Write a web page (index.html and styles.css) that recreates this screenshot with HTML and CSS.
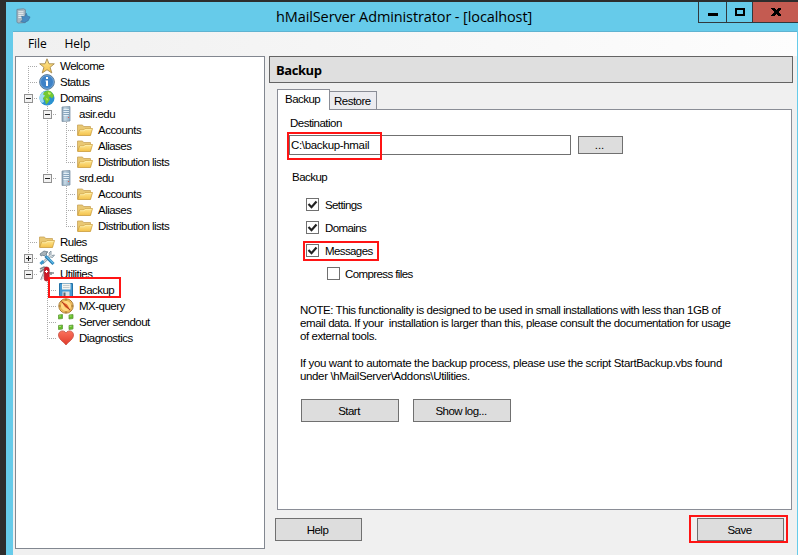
FILE: index.html
```
<!DOCTYPE html>
<html lang="en">
<head>
<meta charset="utf-8">
<title>hMailServer Administrator - [localhost]</title>
<link rel="stylesheet" href="styles.css">
</head>
<body>
<svg class="defs" width="0" height="0">
  <defs>
    <linearGradient id="gold" x1="0" y1="0" x2="0" y2="1"><stop offset="0" stop-color="#ffe893"/><stop offset="1" stop-color="#f3c14a"/></linearGradient>
    <linearGradient id="steel" x1="0" y1="0" x2="1" y2="0"><stop offset="0" stop-color="#7d98ad"/><stop offset=".35" stop-color="#c9dbe8"/><stop offset="1" stop-color="#8daabe"/></linearGradient>
    <linearGradient id="red" x1="0" y1="0" x2="0" y2="1"><stop offset="0" stop-color="#fb725d"/><stop offset="1" stop-color="#df3b2b"/></linearGradient>
    <symbol id="star" viewBox="0 0 16 16"><path d="M8 .8l2 5h5.300l-4.200 3.500 1.700 5.700L8 11.700 3.200 15l1.700-5.700L.7 5.800H6z" fill="url(#gold)" stroke="#a58a50" stroke-width=".9"/></symbol>
    <symbol id="info" viewBox="0 0 16 16"><circle cx="8" cy="8" r="7.400" fill="#3e82c7" stroke="#5f7890" stroke-width=".9"/><circle cx="8" cy="8" r="6.500" fill="none" stroke="#8bbbe6" stroke-width=".6"/><path d="M7 3h2v2H7zM6.500 6.500H9V12H7V7.500h-.5z" fill="#fff"/></symbol>
    <symbol id="globe" viewBox="0 0 16 16"><circle cx="8" cy="8" r="7.500" fill="#2b92d0"/><path d="M1 5a7.500 7.500 0 0 1 5-4L5 4l2 2-3 2 1 4-2 1A7 7 0 0 1 1 5z" fill="#9edbf3"/><path d="M5 2l4-1.500 3 1 3 4-2 3-2-2-1 1 1 2-2 3-2 2-1-4-2-2 2-3-2-1z" fill="#75c832"/><path d="M9 2l3 1-1 2-2-1zM7 8l2 1-1 2z" fill="#c8ed62"/></symbol>
    <symbol id="server" viewBox="0 0 16 16"><path d="M4 1l8-.5V15l-8 .5z" fill="url(#steel)" stroke="#8196a7" stroke-width=".8"/><path d="M5.500 3.500h5.500M5.500 5.500h5.500M5.500 7.500h5.500M5.500 9.500h5" stroke="#eff8fd" stroke-width=".8"/><path d="M5.500 4.500h5.500M5.500 6.500h5.500M5.500 8.500h5.500" stroke="#688ca9" stroke-width=".6"/><path d="M10 11h1v1h-1z" fill="#ef5b54"/></symbol>
    <symbol id="folder" viewBox="0 0 16 16"><path d="M.5 13V3h5l1 1.500h7V13z" fill="#e9c873" stroke="#c9a55a" stroke-width=".8"/><path d="M.7 13.500L2.500 8h4l1.500-1.500h7.500L13.500 13.500z" fill="url(#gold)" stroke="#cda145" stroke-width=".8"/><path d="M3 8.700h4l1.500-1.400h6" fill="none" stroke="#fff2b6" stroke-width=".7"/></symbol>
    <symbol id="tools" viewBox="0 0 16 16"><path d="M12 1l-2 2 .5 2L3 12.500 4 14l7.500-7 2 .5L15.500 5l-2.500.5-1-1z" fill="#d8dfe3" stroke="#798b97" stroke-width=".8"/><path d="M1 4l4-3 4 1-2 1 1 1-3 2-1-1-2 1z" fill="#a8b3ba" stroke="#687b87" stroke-width=".8"/><path d="M6.500 6l8 8" stroke="#2278ae" stroke-width="3"/><path d="M7.500 6.500l7 7" stroke="#63bce9" stroke-width="1.200"/><path d="M1.500 14l3-3" stroke="#3c98cc" stroke-width="3"/></symbol>
    <symbol id="knife" viewBox="0 0 16 16"><path d="M1 3l4-2 3 1M1 6l4-3M2 14l4-10M10 7h5M12 6v3" fill="none" stroke="#838b8f" stroke-width="1.600"/><path d="M2.500 14L6 5" stroke="#d4dade" stroke-width="1"/><rect x="5.200" y="1" width="5" height="14" rx="2.500" fill="#cf1926" stroke="#9c1c24" stroke-width=".7"/><path d="M7.500 4v3M6 5.500h3" stroke="#fff" stroke-width="1"/></symbol>
    <symbol id="disk" viewBox="0 0 16 16"><path d="M1.500 1.500h13v13h-12l-1-1z" fill="#4499d2" stroke="#2372a6"/><path d="M4 1.500h8.500v6H4z" fill="#f5f4ef"/><path d="M5 3.500h6.500M5 5.500h6.500" stroke="#b7c0c4" stroke-width=".8"/><path d="M4.500 9.500h7V15h-7z" fill="#dce1e4"/><path d="M5.500 10.500h2V14h-2z" fill="#576977"/></symbol>
    <symbol id="compass" viewBox="0 0 16 16"><circle cx="8" cy="8" r="7.200" fill="#f8c765" stroke="#aa7b35"/><circle cx="8" cy="8" r="5.600" fill="#ffd982" stroke="#d79d42" stroke-width=".8"/><path d="M3 3l6 3.500L13 13 7 9z" fill="#e75a23"/><path d="M3.500 3.500l8.500 8.500" stroke="#963e29" stroke-width=".8"/><path d="M8 1v1.500M8 13.500V15M1 8h1.500M13.500 8H15" stroke="#8b672d"/></symbol>
    <symbol id="nodes" viewBox="0 0 16 16"><g fill="#63bf28" stroke="#659a3f" stroke-width=".8"><path d="M.5 1l4-.5v4l-4 .5zM11 1l4-.5v4l-4 .5zM.5 11.500l4-.5v4l-4 .5zM11 11.500l4-.5v4l-4 .5z"/></g><path d="M1 2h2M11.500 2h2M1 12.500h2M11.500 12.500h2" stroke="#a4df69"/></symbol>
    <symbol id="heart" viewBox="0 0 16 16"><path d="M8 3C6-.5.5.5.5 5c0 4 4 6 7.500 10 3.500-4 7.500-6 7.500-10C15.500.5 10 -.5 8 3z" fill="url(#red)" stroke="#c75145" stroke-width=".8"/></symbol>
  </defs>
</svg>
<div class="window">
  <header class="titlebar">
    <svg class="appicon" viewBox="0 0 16 16"><path d="M1 1l7-.7 2 1V15l-8 .5-1-1z" fill="#a9b8c2" stroke="#697f91" stroke-width=".8"/><path d="M2.500 3.500H8M2.500 5.500H8M2.500 7.500H8M2.500 9.500H6" stroke="#f0f3f5"/><path d="M6 8l3 1 2-4 1 3 3 1-2 4-4 2-4-1 2-2z" fill="#478cc2" stroke="#376d9a" stroke-width=".6"/></svg>
    <h1 class="title"><span>hMailServer Administrator - [localhost]</span></h1>
    <div class="controls">
      <div class="ctl min"><svg width="12" height="10"><path d="M1 6h10v3H1z"/></svg></div>
      <div class="ctl max"><svg width="12" height="10"><path d="M2 2h8v6H2z" fill="none" stroke="#000" stroke-width="2"/></svg></div>
      <div class="ctl close"><svg width="10" height="8" shape-rendering="crispEdges"><path d="M0 0h3l2 2 2-2h3v1L7 4l3 3v1H7L5 6 3 8H0V7l3-3-3-3z"/></svg></div>
    </div>
  </header>
  <div class="client">
    <nav class="menu"><span>File</span><span class="menuhelp">Help</span></nav>
    <main class="panes">
      <div class="tree">
        <div class="row"><i class="g first"></i><svg><use href="#star"/></svg><span>Welcome</span></div>
        <div class="row"><i class="g tee"></i><svg><use href="#info"/></svg><span>Status</span></div>
        <div class="row"><i class="g tee box"></i><svg><use href="#globe"/></svg><span>Domains</span></div>
        <div class="row"><i class="g v"></i><i class="g tee box"></i><svg><use href="#server"/></svg><span>asir.edu</span></div>
        <div class="row"><i class="g v"></i><i class="g v"></i><i class="g tee"></i><svg><use href="#folder"/></svg><span>Accounts</span></div>
        <div class="row"><i class="g v"></i><i class="g v"></i><i class="g tee"></i><svg><use href="#folder"/></svg><span>Aliases</span></div>
        <div class="row"><i class="g v"></i><i class="g v"></i><i class="g last"></i><svg><use href="#folder"/></svg><span>Distribution lists</span></div>
        <div class="row"><i class="g v"></i><i class="g last box"></i><svg><use href="#server"/></svg><span>srd.edu</span></div>
        <div class="row"><i class="g v"></i><i class="g"></i><i class="g tee"></i><svg><use href="#folder"/></svg><span>Accounts</span></div>
        <div class="row"><i class="g v"></i><i class="g"></i><i class="g tee"></i><svg><use href="#folder"/></svg><span>Aliases</span></div>
        <div class="row"><i class="g v"></i><i class="g"></i><i class="g last"></i><svg><use href="#folder"/></svg><span>Distribution lists</span></div>
        <div class="row"><i class="g tee"></i><svg><use href="#folder"/></svg><span>Rules</span></div>
        <div class="row"><i class="g tee box plus"></i><svg><use href="#tools"/></svg><span>Settings</span></div>
        <div class="row"><i class="g last box"></i><svg><use href="#knife"/></svg><span>Utilities</span></div>
        <div class="row"><i class="g"></i><i class="g tee"></i><svg><use href="#disk"/></svg><span>Backup</span></div>
        <div class="row"><i class="g"></i><i class="g tee"></i><svg><use href="#compass"/></svg><span>MX-query</span></div>
        <div class="row"><i class="g"></i><i class="g tee"></i><svg><use href="#nodes"/></svg><span>Server sendout</span></div>
        <div class="row"><i class="g"></i><i class="g last"></i><svg><use href="#heart"/></svg><span>Diagnostics</span></div>
      </div>
      <section class="content">
        <h2 class="heading"><span>Backup</span></h2>
        <div class="tabs"><div class="tab active"><span>Backup</span></div><div class="tab"><span>Restore</span></div></div>
        <div class="page">
          <div class="label dest"><span>Destination</span></div>
          <div class="path"><div class="input"><span>C:\backup-hmail</span></div><div class="button browse"><span>...</span></div></div>
          <div class="label group"><span>Backup</span></div>
          <div class="checks">
            <div class="check"><i><svg viewBox="0 0 11 11"><path d="M1.500 5l3 3.200L9.500 2.500"/></svg></i><span>Settings</span></div>
            <div class="check"><i><svg viewBox="0 0 11 11"><path d="M1.500 5l3 3.200L9.500 2.500"/></svg></i><span>Domains</span></div>
            <div class="check"><i><svg viewBox="0 0 11 11"><path d="M1.500 5l3 3.200L9.500 2.500"/></svg></i><span>Messages</span></div>
            <div class="check sub"><i></i><span>Compress files</span></div>
          </div>
          <p class="note n1"><span>NOTE: This functionality is designed to be used in small installations with less than 1GB of</span><br><span>email data. If your&nbsp; installation is larger than this, please consult the documentation for usage</span><br><span>of external tools.</span></p>
          <p class="note n2"><span>If you want to automate the backup process, please use the script StartBackup.vbs found</span><br><span>under \hMailServer\Addons\Utilities.</span></p>
          <div class="actions"><div class="button"><span>Start</span></div><div class="button"><span>Show log...</span></div></div>
        </div>
        <footer class="footer"><div class="button"><span>Help</span></div><div class="button"><span>Save</span></div></footer>
      </section>
    </main>
  </div>
</div>
<div class="mark m-tree"></div>
<div class="mark m-path"></div>
<div class="mark m-msg"></div>
<div class="mark m-save"></div>
</body>
</html>
```
FILE: styles.css
```
*, *::before { box-sizing: border-box; }
body { margin: 0; width: 798px; height: 555px; overflow: hidden; background: #2d2d2d; padding: 2px 0 0 6px; font: 11.5px/16px "Liberation Sans", sans-serif; letter-spacing: -0.52px; color: #000; white-space: nowrap; }
.defs { position: absolute; }
.window { height: 553px; background: #66cbea; padding: 0 1px 0 7px; }
.titlebar { height: 30px; display: flex; align-items: flex-start; border-bottom: 1px solid #5fb3d1; }
.appicon { width: 15px; height: 16px; margin: 6px 0 0 3px; }
.title { margin: 5px 0 0; padding-left: 245px; width: 667px; font: 14.5px/20px "Open Sans", sans-serif; letter-spacing: -0.11px; }
.controls { display: flex; height: 21px; margin-right: -1px; flex: 1; border: 1px solid #31383d; border-width: 0 0 1px 1px; }
.ctl { display: flex; align-items: center; justify-content: center; width: 28px; border-right: 1px solid #31383d; }
.ctl.min { width: 28px; }
.ctl.max { width: 26px; }
.ctl.close { flex: 1; background: #c45b51; border-right: 0; }
.client { height: 523px; background: #f0f0f0; }
.menu { height: 24px; display: flex; padding: 3px 0 0 15px; font: 12px/18px "Open Sans", sans-serif; letter-spacing: -0.1px; background: linear-gradient(90deg, #f0f0f0, #fdfdfd); }
.menuhelp { margin-left: 18px; }
.panes { display: flex; padding-left: 2px; }
.tree { width: 250px; height: 493px; border: 1px solid #828790; background: #fff; padding: 1px 0 0 3px; }
.row { display: flex; height: 16px; align-items: center; }
.row > svg { width: 16px; height: 16px; margin-left: 1px; flex: none; }
.row > span { margin-left: 5px; }
.g { width: 19px; height: 16px; position: relative; flex: none; }
.g.v, .g.tee, .g.last, .g.first { --v: repeating-linear-gradient(180deg, #aaa 0 1px, transparent 1px 2px); --h: repeating-linear-gradient(90deg, #aaa 0 1px, transparent 1px 2px); background-repeat: no-repeat; }
.g.v { background-image: var(--v); background-size: 1px 16px; background-position: 9px 0; }
.g.tee { background-image: var(--v), var(--h); background-size: 1px 16px, 10px 1px; background-position: 9px 0, 9px 8px; }
.g.last { background-image: var(--v), var(--h); background-size: 1px 8px, 10px 1px; background-position: 9px 0, 9px 8px; }
.g.first { background-image: var(--v), var(--h); background-size: 1px 8px, 10px 1px; background-position: 9px 8px, 9px 8px; }
.box::before { content: ""; position: absolute; left: 5px; top: 4px; width: 9px; height: 9px; border: 1px solid #919191; background: linear-gradient(#222, #222) 1px 3px / 5px 1px no-repeat, #f2f2f2; }
.box.plus::before { background: linear-gradient(#222, #222) 1px 3px / 5px 1px no-repeat, linear-gradient(#222, #222) 3px 1px / 1px 5px no-repeat, #f2f2f2; }
.content { margin-left: 4px; width: 524px; }
.heading { margin: 0; height: 27px; border: 1px solid #646464; background: #dfdfdf; padding: 4px 0 0 6px; font: bold 13px/18px "Open Sans", sans-serif; letter-spacing: -0.45px; }
.tabs { display: flex; align-items: flex-end; height: 26px; padding-left: 8px; }
.tab { height: 18px; width: 47px; border: 1px solid #8a8d96; border-width: 1px 1px 0 0; background: #ececf0; padding: 1px 0 0 4px; }
.tab.active { width: 53px; height: 21px; border-left-width: 1px; background: #fff; padding: 1px 0 0 7px; margin-bottom: -1px; position: relative; }
.page { margin-left: 8px; width: 515px; height: 401px; background: #fff; border: 1px solid #8a8d96; padding: 5px 0 0 11px; }
.dest { padding-left: 1px; }
.path { display: flex; margin-top: 4px; gap: 7px; align-items: center; }
.input { width: 282px; height: 20px; border: 1px solid #707070; padding: 1px 0 0 1px; letter-spacing: -0.33px; }
.button { display: flex; align-items: center; justify-content: center; width: 98px; height: 23px; border: 1px solid #707070; background: #ddd; padding-right: 2px; }
.button.browse { width: 45px; height: 18px; letter-spacing: 0; margin-top: -1px; }
.group { margin-top: 14px; padding-left: 3px; }
.checks { padding: 8px 0 0 17px; letter-spacing: -0.6px; }
.check { height: 23px; display: flex; align-items: center; }
.check i { width: 13px; height: 13px; border: 1px solid #707070; background: #fff; margin-right: 6px; display: block; }
.check svg { display: block; width: 11px; height: 11px; }
.check path { fill: none; stroke: #222; stroke-width: 2.2; }
.check.sub { padding-left: 21px; }
.check.sub i { margin-right: 5px; }
.note { margin: 0 0 0 11px; line-height: 13px; letter-spacing: -0.425px; }
.n1 { padding-top: 19px; }
.n2 { padding-top: 14px; letter-spacing: -0.36px; }
.actions { display: flex; gap: 14px; padding: 16px 0 0 12px; }
.footer { display: flex; justify-content: space-between; padding: 8px 9px 0 6px; }
.footer .button { width: 87px; }
.mark { position: absolute; border: 2px solid #ff1414; z-index: 2; }
.m-tree { left: 48px; top: 277px; width: 73px; height: 21px; }
.m-path { left: 287px; top: 132px; width: 95px; height: 28px; }
.m-msg { left: 303px; top: 241px; width: 76px; height: 20px; }
.m-save { left: 689px; top: 515px; width: 99px; height: 28px; }
```
